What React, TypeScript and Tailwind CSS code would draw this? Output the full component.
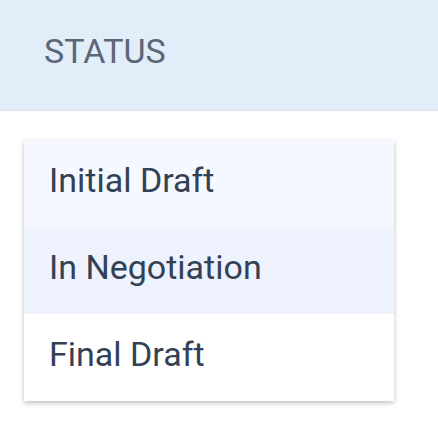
export default function App() {
  const items = [
    { label: "Initial Draft", bg: "bg-[#f5f8fe]" },
    { label: "In Negotiation", bg: "bg-[#edf2fc]" },
    { label: "Final Draft", bg: "bg-white" },
  ];
  return (
    <div className="w-[438px] h-[442px] bg-white" style={{ fontFamily: "Roboto, 'Liberation Sans', sans-serif" }}>
      <div className="h-[111px] bg-[#e1edf8] border-b border-[#dfe3e8] pl-[44px] pt-[34px]">
        <div className="text-[34px] leading-[34px] text-[#5c6677]">STATUS</div>
      </div>
      <div className="pt-[29px] pl-[24px]">
        <div className="w-[370px] bg-white shadow-[0_2px_5px_rgba(0,0,0,0.25)]">
          {items.map((it) => (
            <div key={it.label} className={`h-[87px] pl-[25px] pt-[23px] ${it.bg}`}>
              <div className="text-[34px] leading-[34px] text-[#334155]">{it.label}</div>
            </div>
          ))}
        </div>
      </div>
    </div>
  );
}
